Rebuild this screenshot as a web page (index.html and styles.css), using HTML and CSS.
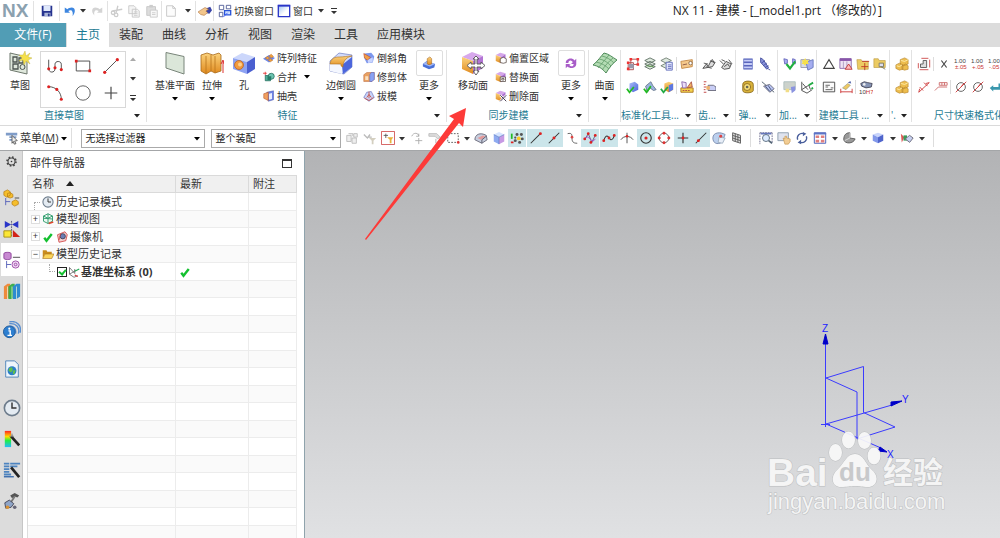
FILE: index.html
```html
<!DOCTYPE html>
<html lang="zh-CN">
<head>
<meta charset="utf-8">
<title>NX 11 - 建模</title>
<link rel="stylesheet" href="styles.css">
</head>
<body>
<svg class="defs" aria-hidden="true">
<defs>
<linearGradient id="gGold" x2="0" y2="1"><stop stop-color="#fbd27c"/><stop offset="1" stop-color="#e08a1e"/></linearGradient>
<linearGradient id="gBlue" x2="1" y2="1"><stop stop-color="#a9bdf8"/><stop offset="1" stop-color="#4a62d8"/></linearGradient>
<linearGradient id="gWin" x2="1" y2="1"><stop stop-color="#9cc0f0"/><stop offset=".6" stop-color="#fff"/></linearGradient>
<linearGradient id="gHue" x2="0" y2="1"><stop stop-color="#f22"/><stop offset=".35" stop-color="#fd0"/><stop offset=".6" stop-color="#2e4"/><stop offset="1" stop-color="#2bf"/></linearGradient>
</defs>
<symbol id="caret" viewBox="0 0 8 5"><path d="M1 1h6L4 4.500z"/></symbol>
<symbol id="caretbar" viewBox="0 0 8 8"><path d="M1 1h6v1H1zM1 4h6L4 7z"/></symbol>
<symbol id="save" viewBox="0 0 16 16"><path d="M2 2h12v12H2z" fill="#26338f"/><path d="M4 2h8v6H4z" fill="#dfe8fb"/><path d="M5 10h7v4H5z" fill="#aab6d8"/><path d="M9 11h2v3H9z" fill="#26338f"/></symbol>
<symbol id="undo" viewBox="0 0 16 16"><path d="M2 4v6h6L6 8c3-2 6-1 5 6 4-5 3-10-1-10-2 0-4 1-5 2z" fill="#3d86e0"/></symbol>
<symbol id="redo" viewBox="0 0 16 16"><path d="M14 4v6H8l2-2C7 6 4 7 5 13 1 9 2 4 6 4c2 0 4 1 5 2z" fill="#d4d4d4"/></symbol>
<symbol id="cut" viewBox="0 0 16 16"><g fill="none" stroke="#ccc" stroke-width="1.500"><path d="M9 2L7 10M3 8l11-2"/><circle cx="3.500" cy="10" r="2"/><circle cx="7" cy="12.500" r="2"/></g></symbol>
<symbol id="copy" viewBox="0 0 16 16"><path d="M2 2h6l2 2v7H2zM6 6h6l2 2v7H6z" fill="#f4f4f4" stroke="#c8c8c8"/><path d="M8 9h4M8 11h4M8 13h4" stroke="#ccc"/></symbol>
<symbol id="paste" viewBox="0 0 16 16"><path d="M2 3h10v10H2z" fill="#ddd" stroke="#c6c6c6"/><path d="M5 1h4v3H5z" fill="#ccc"/><path d="M6 7h8v8H6z" fill="#f8f8f8" stroke="#c8c8c8"/><path d="M8 10h4M8 12h4" stroke="#ccc"/></symbol>
<symbol id="page" viewBox="0 0 16 16"><path d="M3 2h7l3 3v9H3z" fill="#fcfcfc" stroke="#c4c4c4"/><path d="M10 2v3h3" fill="none" stroke="#c4c4c4"/></symbol>
<symbol id="touch" viewBox="0 0 16 16"><path d="M9 5l5-2 2 4-3 4-5-1z" fill="#3a45a8"/><path d="M0 9l8-5 4 2-3 2 2 2-4 3-4-1z" fill="#f2c68c" stroke="#a86c3a" stroke-width=".6"/></symbol>
<symbol id="switch" viewBox="0 0 16 16"><g fill="#fff" stroke="#4a5794"><path d="M1.500 1.500h5v5h-5zM9.500 1.500h5v4h-5zM1.500 9.500h4v5h-4z"/></g><path d="M7.500 7.500h7v5h-7z" fill="#cfe0ff" stroke="#2a55d8" stroke-width="1.500"/><path d="M6 15l5-5" stroke="#35f"/></symbol>
<symbol id="window" viewBox="0 0 16 16"><path d="M1.500 1.500h13v13h-13z" fill="url(#gWin)" stroke="#2a35c8" stroke-width="1.500"/><path d="M1 1h14v2H1z" fill="#2a35c8"/></symbol>

<symbol id="sketch" viewBox="0 0 24 24"><path d="M2 2l17 4v17L2 19z" fill="#dfe8dc" stroke="#6d776c"/><path d="M5 6h4v5H5zM11 7h4v5h-4zM5 13h5v5H5z" fill="none" stroke="#4c5450" stroke-width="1.300"/><circle cx="14.500" cy="16" r="2.500" fill="none" stroke="#4c5450"/><path d="M17 0l1 5 4-3-2 4 4 1-4 2 2 4-4-3-2 4-1-5-4 1 3-3-3-3h4z" fill="#f6e04a" stroke="#b9ac3a" stroke-width=".4"/></symbol>
<symbol id="profile" viewBox="0 0 20 20"><path d="M3 3v10c0 5 7 5 7 0V8c0-4 7-4 7 0v7" fill="none" stroke="#444"/><g fill="#d22"><circle cx="3" cy="13" r="1.700"/><circle cx="10" cy="12" r="1.700"/><circle cx="17" cy="14" r="1.700"/></g></symbol>
<symbol id="rect" viewBox="0 0 20 20"><path d="M2.500 4.500h15v11h-15z" fill="none" stroke="#444"/><path d="M1 3h3v3H1zM16 14h3v3h-3z" fill="#d22"/></symbol>
<symbol id="line" viewBox="0 0 20 20"><path d="M3 17L17 3" stroke="#444"/><circle cx="3" cy="17" r="1.800" fill="#d22"/><circle cx="17" cy="3" r="1.800" fill="#d22"/></symbol>
<symbol id="arc" viewBox="0 0 20 20"><path d="M3 3c8 0 14 6 14 14" fill="none" stroke="#444"/><g fill="#d22"><circle cx="3" cy="3" r="1.700"/><circle cx="12" cy="6" r="1.700"/><circle cx="17" cy="17" r="1.700"/></g></symbol>
<symbol id="circle" viewBox="0 0 20 20"><circle cx="10" cy="10" r="8" fill="none" stroke="#555"/></symbol>
<symbol id="plus" viewBox="0 0 20 20"><path d="M10 3v14M3 10h14" stroke="#444" stroke-width="1.300"/></symbol>

<symbol id="plane" viewBox="0 0 24 24"><path d="M3 1.500l18 4V23L3 17z" fill="#dbe6d9" stroke="#79857a"/></symbol>
<symbol id="extrude" viewBox="0 0 24 24"><path d="M1 4l6-2 6 2 6-2 2 2v16l-6 2-4-2-5 3-5-3z" fill="url(#gGold)" stroke="#a86a1a" stroke-width=".8"/><path d="M6 5v17M11 4v16M15 5v17" stroke="#b8741c" stroke-width=".8"/><path d="M23 22V10M21 13l2-4 1 4" stroke="#d33" fill="none"/></symbol>
<symbol id="hole" viewBox="0 0 24 24"><path d="M1 7l9-5 13 4-8 5z" fill="#ccd7fb"/><path d="M1 7l14 4v12L1 18z" fill="#8da2f2"/><path d="M15 11l8-5v12l-8 5z" fill="#4a5fd0"/><circle cx="7" cy="14" r="4.500" fill="#f29a3c" stroke="#b35d1e" stroke-width=".7"/><circle cx="8" cy="13.500" r="2" fill="#ffcf8a"/></symbol>
<symbol id="blend" viewBox="0 0 24 24"><path d="M1 10l9-8 13 2v12l-8 7-14-3z" fill="#d3dcfb" stroke="#5a6bb8" stroke-width=".6"/><path d="M1 12l12 2v9L1 20z" fill="#f4f7ff"/><path d="M13 14l10-8v10l-9 7z" fill="#4c66dc"/><path d="M1 13c1-6 5-7 9-7 5 0 8-1 13-1-5 1-8 4-9 9v2l-2-1v-2z" fill="url(#gGold)" stroke="#b0701c" stroke-width=".6"/></symbol>
<symbol id="moveface" viewBox="0 0 24 24"><path d="M1 6l10-5 11 4-10 5z" fill="#d7a8ec"/><path d="M1 6l11 4v13L1 18z" fill="url(#gGold)"/><path d="M12 10l10-5v12l-10 6z" fill="#b274d4"/><path d="M15 5l3 3h-2v5h4v-2l4 3.500-4 3.500v-2h-4v4h2l-3 4-3-4h2v-4h-4v2l-4-3.500L10 11v2h4V8h-2z" fill="#fff" stroke="#555" stroke-width=".9"/></symbol>
<symbol id="surface" viewBox="0 0 24 24"><path d="M0 14C5 10 8 5 11 2c5 1 8 4 13 7-4 3-8 8-11 13C9 17 5 15 0 14z" fill="#b4dcb4" stroke="#4f8a5a"/><path d="M3 11c6 1 10 4 13 7M6 8c6 1 9 4 12 7M9 5c5 1 9 4 12 7M5 17c4-4 7-9 11-13M9 19c3-4 7-9 11-12" stroke="#5f9a68" fill="none" stroke-width=".8"/></symbol>
<symbol id="feat" viewBox="0 0 16 16"><path d="M1 9l4-3 10 3-1 4-6 2-7-3z" fill="#4970d8"/><path d="M1 9l5-3 9 3-6 3z" fill="#9fb7f6"/><path d="M6 3l3-2 2 2v6L8 10 6 9z" fill="url(#gGold)" stroke="#a06018" stroke-width=".6"/></symbol>
<symbol id="cycle" viewBox="0 0 16 16"><path d="M2 8c0-5 7-7 10-3l2-2v6H8l2-2C8 4 5 5 5 8zM14 9c0 5-7 6-10 3l-2 2V9h6l-2 1c2 3 5 2 5-1z" fill="#a85cc8"/></symbol>
<symbol id="pattern" viewBox="0 0 16 16"><path d="M0 9l8-5 8 4-8 6z" fill="#6d88e8"/><path d="M3 8l3-2 3 2-3 2zM8 5l3-2 3 3-3 2zM7 11l3-2 3 2-3 2z" fill="#f0a040" stroke="#b56a20" stroke-width=".6"/></symbol>
<symbol id="unite" viewBox="0 0 16 16"><path d="M0 3h5M3 1v5" stroke="#d22"/><path d="M3 6h7v7H3z" fill="#4fae98" stroke="#216c5c"/><circle cx="11" cy="7" r="4" fill="#6cc4b0" stroke="#216c5c"/><path d="M6 7h5v5H6z" fill="#267a68"/></symbol>
<symbol id="shell" viewBox="0 0 16 16"><path d="M5 3l9-2v12l-7 2z" fill="#6c82e8" stroke="#3a48a0" stroke-width=".6"/><path d="M8 5l4-1v8l-4 1z" fill="#e8edff"/><path d="M1 5l6-2v11l-6-3z" fill="#f0a060" stroke="#b54c20" stroke-width=".7"/></symbol>
<symbol id="chamfer" viewBox="0 0 16 16"><path d="M2 2l9-1 4 5-2 8-8 1-3-6z" fill="#7d98ee"/><path d="M1 2l9 5-4 4-4-3z" fill="#f0a048" stroke="#c03d20" stroke-width=".7"/><path d="M6 11l7-4v6l-6 2z" fill="#c9d5ff"/></symbol>
<symbol id="trim" viewBox="0 0 16 16"><path d="M1 5l4-3h10v9l-3 3H1z" fill="#e8a060" stroke="#b35a30" stroke-width=".6"/><path d="M9 5l2-3h4v9l-3 3H9z" fill="#8ba2f2" stroke="#4a5cc0" stroke-width=".6"/><path d="M3 7h4v5H3z" fill="#fbe0c0"/></symbol>
<symbol id="draft" viewBox="0 0 16 16"><path d="M1 10l4-7 6-1 4 8-7 5z" fill="#c8d2f8" stroke="#5a68b8" stroke-width=".8"/><path d="M8 2v9M5 10l3-4 3 4M2 11l6 3 6-4" stroke="#c8402c" fill="none"/></symbol>
<symbol id="boxA" viewBox="0 0 16 16"><path d="M1 4l6-3 7 2-6 4z" fill="#d5a6ea"/><path d="M1 4l7 3v8l-7-3z" fill="url(#gGold)"/><path d="M8 7l6-4v8l-6 4z" fill="#ac70d0"/><path d="M7 9l4-2 4 2v5l-4 1-4-1z" fill="#fff" stroke="#554a44"/></symbol>
<symbol id="boxB" viewBox="0 0 16 16"><path d="M1 4l6-3 7 2-6 4z" fill="#d5a6ea"/><path d="M1 4l7 3v8l-7-3z" fill="url(#gGold)"/><path d="M8 7l6-4v8l-6 4z" fill="#ac70d0"/><path d="M7 8h7v6H7zM9 10h3v2H9z" fill="#fff" stroke="#554a44"/></symbol>
<symbol id="boxC" viewBox="0 0 16 16"><path d="M1 4l6-3 7 2-6 4z" fill="#d5a6ea"/><path d="M1 4l7 3v8l-7-3z" fill="url(#gGold)"/><path d="M8 7l6-4v8l-6 4z" fill="#ac70d0"/><path d="M7 7l8 8M15 7l-8 8" stroke="#fff" stroke-width="3"/><path d="M7 7l8 8M15 7l-8 8" stroke="#443b50" stroke-width="1.300"/></symbol>

<symbol id="t1" viewBox="0 0 16 16"><path d="M5.500 2.500h8v6h-8zM2.500 6.500h6v8h-6z" fill="none" stroke="#a44"/><path d="M3 8h6v5H3z" fill="#99a"/><path d="M4 1h3v3H4zM12 1h3v3h-3zM12 7h3v3h-3zM1 12h3v3H1zM1 5h3v3H1z" fill="#e33"/></symbol>
<symbol id="t2" viewBox="0 0 16 16"><g fill="#dfeadf" stroke="#5a6b60"><path d="M2 11l6-3 6 3-6 3zM2 8l6-3 6 3-6 3zM2 4l6-3 6 3-6 3z"/></g><path d="M4 10l8 1" stroke="#5a9a4c"/></symbol>
<symbol id="t3" viewBox="0 0 16 16"><g fill="#dfeadf" stroke="#6d7b70"><path d="M1 10l6-3 6 3-6 3zM1 4l6-3 6 3-6 3z"/></g><path d="M7 6h7v9H7z" fill="#e5e9ff" stroke="#5c68b8"/><path d="M9 9h4M9 11h4M9 13h4" stroke="#5c68b8"/></symbol>
<symbol id="t4" viewBox="0 0 16 16"><path d="M1 5l13-2v8L2 13z" fill="#f5c98c" stroke="#c48742"/><circle cx="12" cy="7" r="2" fill="#fff" stroke="#864"/><path d="M3 9l5-1" stroke="#854"/></symbol>
<symbol id="t5" viewBox="0 0 16 16"><path d="M4 4l6-2 4 3v6l-6 3-4-3z" fill="url(#gBlue)"/><path d="M1 10l3 4 5-6" stroke="#2b2" stroke-width="2" fill="none"/></symbol>
<symbol id="t6" viewBox="0 0 16 16"><path d="M3 7l6-5 2 4 4 5-3 1-4-3-3 5z" fill="#9ab2e0" stroke="#678"/><path d="M1 10l3 4 5-7" stroke="#2b2" stroke-width="2" fill="none"/></symbol>
<symbol id="t7" viewBox="0 0 16 16"><path d="M5 4l5-2 5 2v7l-5 3-5-3z" fill="url(#gGold)"/><path d="M10 6l5-2v7l-5 3z" fill="#5d78e0"/><path d="M1 10l3 4 5-6" stroke="#2a4" stroke-width="2" fill="none"/></symbol>
<symbol id="t8" viewBox="0 0 16 16"><path d="M1 9h14v5H1z" fill="#f5d24e" stroke="#a8731e"/><path d="M2 2l5 1v6H3z" fill="#ecdff7" stroke="#86a"/><path d="M8 9l5-7 1 6z" fill="#f0b060" stroke="#a54"/><path d="M3 12h9" stroke="#a44" stroke-dasharray="2 1"/></symbol>
<symbol id="gear1" viewBox="0 0 16 16"><path d="M1 13l4-5 2 3 3-6 5 1-3 5zM9 5l3-2 2 4" fill="#ddd" stroke="#444"/><path d="M2 7l5 1M5 11l6 2" stroke="#555"/></symbol>
<symbol id="gear2" viewBox="0 0 16 16"><path d="M1 4l4 4M3 3l4 2M3 12l5-7 6 3-2 5-6 1zM11 3l4 5M6 11l4-3 2 3" fill="#ddd" stroke="#444"/></symbol>
<symbol id="gear3" viewBox="0 0 16 16"><path d="M2 2h3M2 5h2M2 8h3M2 11h2M2 14h3" stroke="#b33"/><path d="M7 6h6l3 2v4H7z" fill="#c8cdf5" stroke="#667"/><path d="M5 7h4v4H5z" fill="#eeb26c"/></symbol>
<symbol id="spring1" viewBox="0 0 16 16"><path d="M3 2h10v12H3z" fill="#c6cdf7"/><path d="M3 2.500h10M3 6h10M3 10h10M3 13.500h10" stroke="#5a66bc" stroke-width="1.500"/><path d="M3 2v12M13 2v12" stroke="#7784cc"/></symbol>
<symbol id="spring2" viewBox="0 0 16 16"><path d="M3 1l3 2 6 9-2 2-7-8z" fill="#8a94dc" stroke="#414d9c"/><path d="M4 7l4-3M6 10l4-3M8 12l4-2M11 13l3 2" stroke="#414d9c"/></symbol>
<symbol id="spring3" viewBox="0 0 16 16"><path d="M2 5c0-5 12-5 12 0v7c0 3-12 4-12 0z" fill="#d9b23a" stroke="#8a6a1e"/><circle cx="7" cy="8" r="4" fill="#f4dc7a" stroke="#8a6a1e"/><circle cx="7" cy="8" r="1.500" fill="#665"/></symbol>
<symbol id="spring4" viewBox="0 0 16 16"><path d="M1 2l14 12" stroke="#456"/><path d="M3 7l7-2 5 5-5 4z" fill="#b8c2f0" stroke="#667"/><path d="M5 7l5 6M8 6l4 6" stroke="#457"/></symbol>
<symbol id="m1" viewBox="0 0 16 16"><path d="M1 2l4 1v4l-3 1zM11 2l3 1v5l-3-1z" fill="#a6aef0" stroke="#66b"/><path d="M4 8l4 5 6-8" stroke="#22b040" stroke-width="2.500" fill="none"/></symbol>
<symbol id="m2" viewBox="0 0 16 16"><path d="M1 3h10v9H1z" fill="#d8dde8" stroke="#99a"/><path d="M7 6l8-3v9l-6 3z" fill="#a5adf0" stroke="#67b"/><path d="M6 1l1 3 3-1-1 3 1 2-3 0-1 2-2-2-2 0 1-2-1-3 2 1z" fill="#f6e04a"/></symbol>
<symbol id="m3" viewBox="0 0 16 16"><path d="M1 2h13v9H1z" fill="#ccd2cc" stroke="#abb"/><path d="M9 8l5-1v5l-4 3z" fill="#8a93e0"/><path d="M3 10h4v4H3z" fill="#f1dd88"/></symbol>
<symbol id="m4" viewBox="0 0 16 16"><path d="M2 2v10l6 3 6-4M3 4l6 7M2 11l8-5 2 5" fill="none" stroke="#444"/><path d="M10 6l5-3M13 10l2-1" stroke="#2a4" stroke-width="2"/></symbol>
<symbol id="k1" viewBox="0 0 16 16"><path d="M8 3l6 10H2z" fill="none" stroke="#444" stroke-width="1.200"/></symbol>
<symbol id="k2" viewBox="0 0 16 16"><path d="M1 2h13v11H1z" fill="#eee4f4" stroke="#86a"/><path d="M1 3h13" stroke="#85a" stroke-width="3"/><path d="M5 5v8M9 5v8" stroke="#a9b"/><path d="M11 8l4 6H7z" fill="#fbb" stroke="#b33"/></symbol>
<symbol id="k3" viewBox="0 0 16 16"><path d="M1 3h5l1 2h7v9H2z" fill="#eccb62" stroke="#b8963e" stroke-width=".7"/><path d="M10 7v8M6 11h8M7 5h8" stroke="#b32"/></symbol>
<symbol id="k4" viewBox="0 0 16 16"><path d="M1 2h5l1 2h7v8H1z" fill="#eccb62" stroke="#b8963e" stroke-width=".7"/><path d="M7 7h5v4H7zM9 11l5 3" fill="#dde" stroke="#776"/></symbol>
<symbol id="k5" viewBox="0 0 16 16"><path d="M1.500 2.500h13v11h-13z" fill="#fafafa" stroke="#444"/><path d="M4 6h5M4 8h3M4 11h8M10 9h3" stroke="#555"/></symbol>
<symbol id="k6" viewBox="0 0 16 16"><path d="M2 13.500h13M2 10v5M15 10v5" stroke="#c33" fill="none"/><path d="M4 9l6-5 3 2-5 5z" fill="#edc964" stroke="#887" stroke-width=".6"/><path d="M10 3l3-2 1 3z" fill="#56a"/></symbol>
<symbol id="k7" viewBox="0 0 16 16"><path d="M2 4l4-2 4 1 5 1-1 4-6 1-5-2z" fill="#8795b5" stroke="#445"/><circle cx="6" cy="5" r="1.500" fill="#eee"/><text x="0" y="16" class="micro">10<tspan class="red">H7</tspan></text></symbol>
<symbol id="gold" viewBox="0 0 16 16"><path d="M6 3l5-2 4 2v5l-5 2-4-2zM1 9l4-2 4 2v5l-4 1-4-2zM8 10l4-2 3 2v4l-4 1-3-1z" fill="#edbd4e" stroke="#b5832c" stroke-width=".7"/><path d="M7 4l4 1 4-2M2 10l3 1 3-2" stroke="#fff0b0" fill="none"/></symbol>
<symbol id="d1" viewBox="0 0 16 16"><path d="M4 12V8h3V4h4v8z" fill="#ddd" stroke="#555"/><path d="M5 1.500h8M1.500 7v6M3 14.500h10M14.500 3v9" stroke="#c44"/></symbol>
<symbol id="dx" viewBox="0 0 16 16"><path d="M5 4l6 8M11 4l-6 8" stroke="#444" stroke-width="1.300"/></symbol>
<symbol id="d2" viewBox="0 0 16 16"><text x="0" y="7" class="micro">1.00</text><text x="1" y="14" class="micro red">±.05</text></symbol>
<symbol id="d3" viewBox="0 0 16 16"><text x="0" y="7" class="micro">1.00</text><text x="1" y="14" class="micro red">+.05</text></symbol>
<symbol id="d4" viewBox="0 0 16 16"><text x="0" y="7" class="micro">1.00</text><text x="1" y="14" class="micro red">-.05</text></symbol>
<symbol id="d5" viewBox="0 0 16 16"><path d="M2 14L14 3M3 8l4 4M8 3l4 4M2 14l1-4M14 3l-4 1" stroke="#c33" fill="none"/></symbol>
<symbol id="d6" viewBox="0 0 16 16"><path d="M1 12l4-4h10M6 3h9v3H6zM9 3v3M12 3v3" stroke="#c66" fill="none"/></symbol>
<symbol id="d7" viewBox="0 0 16 16"><circle cx="8" cy="8" r="5" fill="none" stroke="#555"/><path d="M2 14L14 2M8 8l3-4" stroke="#c33"/></symbol>
<symbol id="d8" viewBox="0 0 16 16"><path d="M2 9l4-3v2h6V4h2v7H6v2z" fill="#3a97ad"/></symbol>

<symbol id="menu" viewBox="0 0 16 16"><path d="M1 2h13v3H1zM5 6h8v2H5zM5 9h6v2H5z" fill="#7f9cc8"/><path d="M8 5l6 6-3 .5 1.500 3-2 .5-1-3L8 14z" fill="#eee" stroke="#555"/></symbol>
<symbol id="s1" viewBox="0 0 16 16"><path d="M2 5h5v7H2zM4 3h5v3M8 8h5v6H8zM10 3h4v4h-4z" fill="#eee" stroke="#bbb"/></symbol>
<symbol id="s2" viewBox="0 0 16 16"><path d="M1 4l4 4 3-4M6 7h4" stroke="#bbb" stroke-width="1.500" fill="none"/><path d="M7 8h8l-3 3v4h-2v-4z" fill="#d4cfc0"/></symbol>
<symbol id="s3" viewBox="0 0 16 16"><path d="M.5.500h15v15H.5z" fill="#fff" stroke="#cf4a4a"/><path d="M3 5h5M5.500 3v5" stroke="#555"/><path d="M7 7h7l-2 3v4h-2v-4z" fill="#e9b33c"/></symbol>
<symbol id="s4" viewBox="0 0 16 16"><path d="M2 6c2-5 8-4 8 0M10 3v3H7M10 8v7M6 11h8" stroke="#aaa" fill="none"/></symbol>
<symbol id="s5" viewBox="0 0 16 16"><path d="M1 3h9l4 4-3 2-3-3H1z" fill="#ddd" stroke="#bbb"/><path d="M9 9v5" stroke="#aaa"/></symbol>
<symbol id="s6" viewBox="0 0 16 16"><path d="M2 3h12v10H2z" fill="none" stroke="#555" stroke-dasharray="2 1.500"/><circle cx="14" cy="13" r="1.500" fill="#d33"/></symbol>
<symbol id="s7" viewBox="0 0 16 16"><path d="M1 10c0-6 6-9 13-5l1 5-6 4z" fill="#c7cede" stroke="#667"/><path d="M4 8l6-3 3 1-5 4z" fill="#e49a9a"/><path d="M9 10l5-4M9 10v4" stroke="#556"/></symbol>
<symbol id="s8" viewBox="0 0 16 16"><path d="M2 4l6-3 6 3-6 3z" fill="#d6e4ff"/><path d="M2 4l6 3v8l-6-3z" fill="#8faaf0"/><path d="M8 7l6-3v8l-6 3z" fill="#c79ae4"/><path d="M2 4l6 3 6-3M8 7v8" stroke="#57b" fill="none" stroke-width=".7"/></symbol>
<symbol id="s9" viewBox="0 0 16 16"><path d="M2 3v6" stroke="#2b2" stroke-width="2"/><path d="M1 13h3" stroke="#d22" stroke-width="2"/><g fill="#555"><circle cx="8" cy="4" r="1.700"/><circle cx="13" cy="4" r="1.700"/><circle cx="14" cy="9" r="1.700"/><circle cx="11" cy="13" r="1.700"/><circle cx="6" cy="11" r="1.700"/><circle cx="6" cy="7.500" r="1.300"/></g><circle cx="10" cy="8.500" r="2.200" fill="#fc2"/></symbol>
<symbol id="s10" viewBox="0 0 16 16"><path d="M2 14L13 3" stroke="#333" stroke-width="1.200"/><circle cx="13" cy="3" r="1.700" fill="#d22"/></symbol>
<symbol id="s11" viewBox="0 0 16 16"><path d="M2 14L14 2" stroke="#333" stroke-width="1.200"/><circle cx="8" cy="8" r="1.700" fill="#d22"/></symbol>
<symbol id="s12" viewBox="0 0 16 16"><path d="M3 3c5-1 5 1 5 5s1 6 6 6" fill="none" stroke="#555"/><circle cx="8" cy="7" r="1.500" fill="#d44"/></symbol>
<symbol id="s13" viewBox="0 0 16 16"><path d="M2 10L6 3l4 10 4-8" fill="none" stroke="#557"/><path d="M2 9c4-8 8 8 12 0" fill="none" stroke="#a4c"/><g fill="#d22"><circle cx="2" cy="9" r="1.600"/><circle cx="6" cy="3" r="1.600"/><circle cx="9" cy="13" r="1.600"/><circle cx="14" cy="5" r="1.600"/></g></symbol>
<symbol id="s14" viewBox="0 0 16 16"><path d="M2 11c3-9 6-4 7-2s4 1 5-4" fill="none" stroke="#333" stroke-width="1.200"/><g fill="#d22"><circle cx="2" cy="11" r="1.600"/><circle cx="8" cy="8" r="1.600"/><circle cx="14" cy="5" r="1.600"/></g></symbol>
<symbol id="s15" viewBox="0 0 16 16"><path d="M1 10c3-5 11-5 14 0M8 2v12" fill="none" stroke="#444"/><circle cx="8" cy="6" r="1.500" fill="#d22"/></symbol>
<symbol id="s16" viewBox="0 0 16 16"><circle cx="8" cy="8" r="6" fill="none" stroke="#333" stroke-width="1.300"/><circle cx="8" cy="8" r="1.800" fill="#d22"/></symbol>
<symbol id="s17" viewBox="0 0 16 16"><circle cx="8" cy="8" r="5.500" fill="none" stroke="#555"/><g fill="#d33"><circle cx="8" cy="2.500" r="1.700"/><circle cx="13.500" cy="8" r="1.700"/><circle cx="8" cy="13.500" r="1.700"/><circle cx="2.500" cy="8" r="1.700"/></g></symbol>
<symbol id="s18" viewBox="0 0 16 16"><path d="M8 2v12M2 8h12" stroke="#333" stroke-width="1.300"/><circle cx="8" cy="8" r="1.600" fill="#d22"/></symbol>
<symbol id="s19" viewBox="0 0 16 16"><path d="M2 14L14 2" stroke="#333" stroke-width="1.200"/><circle cx="5" cy="11" r="1.700" fill="#d22"/></symbol>
<symbol id="s20" viewBox="0 0 16 16"><path d="M1 8c0-7 9-7 14-4l-4 9c-5 3-10 1-10-5z" fill="#bcd0ee" stroke="#78a"/><path d="M8 7l7 1-3 6-5-1z" fill="#e8eef8" stroke="#9ab"/><circle cx="10" cy="6" r="1.700" fill="#d44"/></symbol>
<symbol id="s21" viewBox="0 0 16 16"><path d="M3 2l9 3v9l-9-3zM3 5l9 3M3 8l9 3M6 3v9M9 4v9" fill="#ddd" stroke="#555"/></symbol>
<symbol id="v1" viewBox="0 0 16 16"><path d="M1 2h14M1 2v13M15 2v12" stroke="#668" stroke-dasharray="2 1"/><path d="M2 2h12v2H2z" fill="#67b"/><circle cx="8" cy="8" r="4" fill="#dceaff" stroke="#567"/><path d="M11 11l4 3" stroke="#567" stroke-width="2"/></symbol>
<symbol id="v2" viewBox="0 0 16 16"><path d="M1 2h12v9H1z" fill="#dfe3ee" stroke="#89a"/><path d="M7 8l2 1V6l2 0v2l4 1v3l-2 3H9z" fill="#f2cd94" stroke="#c19048" stroke-width=".7"/></symbol>
<symbol id="v3" viewBox="0 0 16 16"><path d="M3 10a5.500 5.500 0 0 1 7-7M13 6a5.500 5.500 0 0 1-7 7" fill="none" stroke="#4a5f9c" stroke-width="1.500"/><path d="M9 1l4 2-4 3zM7 10l-4 3 4 2z" fill="#4a5f9c"/></symbol>
<symbol id="v4" viewBox="0 0 16 16"><path d="M1.500 2h13v12h-13z" fill="#fff" stroke="#3c55b5"/><path d="M1 2h14v2H1z" fill="#5c73c5"/><g fill="#e08080"><path d="M3 5h4v3H3zM9 5h4v3H9zM3 10h4v3H3zM9 10h4v3H9z"/></g></symbol>
<symbol id="v5" viewBox="0 0 16 16"><path d="M2 10c0-6 3-8 7-8v6l6 1c-2 6-12 6-13 1z" fill="#999" stroke="#555"/><path d="M9 2v6l-6 3" stroke="#ddd" fill="none"/></symbol>
<symbol id="v6" viewBox="0 0 16 16"><path d="M2 4l6-2 6 2-6 3z" fill="#c8d4fb"/><path d="M2 4l6 3v7l-6-3z" fill="#8298ea"/><path d="M8 7l6-3v7l-6 3z" fill="#5065cc"/></symbol>
<symbol id="v7" viewBox="0 0 16 16"><path d="M1 3l4 4-3 6z" fill="#d55"/><path d="M4 5h4v6H4z" fill="#3a9b58"/><path d="M6 9l5-4 4 3-4 5z" fill="#c7d0f0" stroke="#667"/></symbol>

<symbol id="cog" viewBox="0 0 16 16"><circle cx="8" cy="8" r="5.500" fill="none" stroke="#444" stroke-width="2" stroke-dasharray="2 2.320"/><circle cx="8" cy="8" r="4.300" fill="#dcdcdc" stroke="#444" stroke-width="1.300"/><circle cx="8" cy="8" r="1" fill="#333"/></symbol>
<symbol id="r1" viewBox="0 0 20 20"><path d="M1 3l4-2 3 2v4l-4 2-3-2zM5 5l3-1 3 2v3l-3 1-3-1zM10 14l4-2 3 2v3l-4 2-3-2z" fill="#f5be2c" stroke="#b87d12" stroke-width=".8"/><path d="M3 10v8M3 14h5" stroke="#5560b8"/><path d="M13 10h5" stroke="#444"/></symbol>
<symbol id="r2" viewBox="0 0 20 20"><path d="M2 1l7 4-7 4zM17 1l-7 4 7 4z" fill="#2a35c8"/><path d="M9.500 1v17" stroke="#557" stroke-dasharray="2 1"/><path d="M1 12h8v7H1z" fill="#fbe736" stroke="#a58d12"/><path d="M11 11l8 8h-8z" fill="#d22418"/></symbol>
<symbol id="r3" viewBox="0 0 20 20"><path d="M1 3c0-2 8-2 8 0v5c0 2-8 2-8 0z" fill="#c88ad2" stroke="#8c3f98"/><path d="M11 7h8" stroke="#444"/><path d="M4 11v8M4 15h5" stroke="#5560b8"/><circle cx="14" cy="15" r="4" fill="#f0d8f4" stroke="#9c4aa6"/><circle cx="14" cy="15" r="1.500" fill="none" stroke="#9c4aa6"/></symbol>
<symbol id="r4" viewBox="0 0 20 20"><path d="M1 5l4-3h3v14l-3 3H1z" fill="#ef8a3c"/><path d="M6 5l4-3h3v14l-3 3H6z" fill="#3cae4e"/><path d="M11 5l4-3h4v14l-4 3h-4z" fill="#2e8bd0"/><path d="M5 5v14M10 5v14M15 5v14" stroke="#e8f4e0" fill="none" stroke-width=".8"/></symbol>
<symbol id="r5" viewBox="0 0 20 20"><path d="M7 6c5-1 8 3 7 8M7 3c8-1 12 5 10 11M7 1c9-2 14 5 12 12" fill="none" stroke="#5a8fd0" stroke-width="1.500"/><circle cx="7" cy="12" r="6.500" fill="#2d7fd0" stroke="#1d5796"/><path d="M6 11h2v5M5 16h5" stroke="#fff" stroke-width="1.600" fill="none"/><circle cx="7" cy="8.500" r="1.200" fill="#fff"/></symbol>
<symbol id="r6" viewBox="0 0 20 20"><path d="M3 1h10l4 4v14H3z" fill="#eef5fb" stroke="#4a80b8"/><circle cx="10" cy="12" r="5" fill="#2b7fc8"/><path d="M7 9l3-1 1 3-2 3-3-2zM11 12l3-1-1 4-2 1z" fill="#62c04a"/></symbol>
<symbol id="clock" viewBox="0 0 20 20"><circle cx="10" cy="10" r="8.500" fill="#e4ebf2" stroke="#6d7c8c" stroke-width="1.800"/><path d="M10 4v6h5" stroke="#333" fill="none" stroke-width="1.600"/></symbol>
<symbol id="r8" viewBox="0 0 20 20"><path d="M2 1h7v18H2z" fill="url(#gHue)"/><path d="M9 7l9 10" stroke="#222" stroke-width="3"/><path d="M10 4v4M7 7h5" stroke="#777"/></symbol>
<symbol id="r9" viewBox="0 0 20 20"><path d="M1 3h6M1 6h6M1 9h6M1 12h6M1 15h8M8 3h11M8 6h8" stroke="#4d84c0" stroke-width="2"/><path d="M1 17.500h11" stroke="#36a" stroke-width="1.500"/><path d="M9 7l9 11" stroke="#222" stroke-width="3"/></symbol>
<symbol id="r10" viewBox="0 0 20 20"><path d="M8 4l5-3 5 3-2 2-3-1-3 2z" fill="#555"/><path d="M13 5l-4 6" stroke="#777" stroke-width="2"/><path d="M2 12l5-3 5 4-3 4-6 1z" fill="#8fa5c8" stroke="#445"/><circle cx="5" cy="17" r="2" fill="#d89030"/><circle cx="13" cy="17" r="2" fill="#667"/></symbol>

<symbol id="views" viewBox="0 0 16 16"><path d="M8 1l6 3v7l-6 3-6-3V4zM8 1v13M2 7l12 1M2 4l6 3 6-3" fill="#eaf7f0" stroke="#2b9a6a" stroke-width="1.200"/><path d="M9 14l6-2" stroke="#e0462c" stroke-width="2"/></symbol>
<symbol id="cam" viewBox="0 0 16 16"><path d="M2 5l10-4 3 4-2 8-9 2z" fill="#f3d0d0" stroke="#c33"/><circle cx="9" cy="7" r="3.500" fill="#6b7db5" stroke="#334"/><path d="M4 12l2-8" stroke="#c33"/></symbol>
<symbol id="folder" viewBox="0 0 16 16"><path d="M1 3h5l1 2h6v3H4l-3 6z" fill="#c98c1e"/><path d="M4 8h12l-3 6H1z" fill="#fbd45a" stroke="#a8741a" stroke-width=".8"/></symbol>
<symbol id="check" viewBox="0 0 16 16"><path d="M3 9l3 4 7-9" fill="none" stroke="#14c030" stroke-width="3.200"/></symbol>
<symbol id="csys" viewBox="0 0 16 16"><path d="M2 2v9l6 4 5-2M2 2l7 8V4M2 11l8-5" fill="none" stroke="#555"/><path d="M9 7l6-3" stroke="#2a5" stroke-width="1.500"/><path d="M9 12l4 2" stroke="#d33" stroke-width="1.500"/></symbol>
</svg>

<header class="titlebar">
  <div class="brand">NX</div>
  <div class="qa qa-one"><button aria-label="保存"><svg><use href="#save"/></svg></button></div>
  <div class="qa qa-undo"><button aria-label="撤消"><svg><use href="#undo"/></svg></button><button class="drop" aria-label="撤消列表"><svg><use href="#caret"/></svg></button><button aria-label="重做"><svg><use href="#redo"/></svg></button></div>
  <div class="qa qa-edit"><button aria-label="剪切"><svg><use href="#cut"/></svg></button><button aria-label="复制"><svg><use href="#copy"/></svg></button><button aria-label="粘贴"><svg><use href="#paste"/></svg></button></div>
  <div class="qa qa-new"><button aria-label="新建"><svg><use href="#page"/></svg></button><button class="drop" aria-label="新建列表"><svg><use href="#caret"/></svg></button></div>
  <div class="qa qa-touch"><button aria-label="触控"><svg><use href="#touch"/></svg></button></div>
  <div class="qa-windows"><button><svg><use href="#switch"/></svg>切换窗口</button><button><svg><use href="#window"/></svg>窗口</button><button class="drop" aria-label="窗口列表"><svg><use href="#caret"/></svg></button><button class="drop tall" aria-label="自定义"><svg><use href="#caretbar"/></svg></button></div>
  <h1 class="doc-title">NX 11 - 建模 - [_model1.prt （修改的）]</h1>
</header>

<nav class="tabs">
  <button class="file">文件(F)</button><button class="active">主页</button><button>装配</button><button>曲线</button><button>分析</button><button>视图</button><button>渲染</button><button>工具</button><button>应用模块</button>
</nav>

<section class="ribbon">
  <div class="group g-sketch">
    <div class="body">
      <button class="large"><svg><use href="#sketch"/></svg><span>草图</span></button>
      <div class="gallery">
        <button aria-label="轮廓"><svg><use href="#profile"/></svg></button><button aria-label="矩形"><svg><use href="#rect"/></svg></button><button aria-label="直线"><svg><use href="#line"/></svg></button>
        <button aria-label="圆弧"><svg><use href="#arc"/></svg></button><button aria-label="圆"><svg><use href="#circle"/></svg></button><button aria-label="点"><svg><use href="#plus"/></svg></button>
      </div>
      <div class="scroller"><button class="drop up" aria-label="上"><svg><use href="#caret"/></svg></button><button class="drop" aria-label="下"><svg><use href="#caret"/></svg></button><button class="drop tall" aria-label="展开"><svg><use href="#caretbar"/></svg></button></div>
    </div>
    <div class="foot"><span>直接草图</span><button class="drop" aria-label="直接草图选项"><svg><use href="#caret"/></svg></button></div>
  </div>
  <div class="group g-feature">
    <div class="body">
      <button class="large"><svg><use href="#plane"/></svg><span>基准平面</span><svg class="dn"><use href="#caret"/></svg></button>
      <button class="large"><svg><use href="#extrude"/></svg><span>拉伸</span><svg class="dn"><use href="#caret"/></svg></button>
      <button class="large"><svg><use href="#hole"/></svg><span>孔</span></button>
      <div class="stack">
        <button><svg><use href="#pattern"/></svg>阵列特征</button>
        <button><svg><use href="#unite"/></svg>合并<svg class="dn"><use href="#caret"/></svg></button>
        <button><svg><use href="#shell"/></svg>抽壳</button>
      </div>
      <button class="large wide"><svg><use href="#blend"/></svg><span>边倒圆</span><svg class="dn"><use href="#caret"/></svg></button>
      <div class="stack">
        <button><svg><use href="#chamfer"/></svg>倒斜角</button>
        <button><svg><use href="#trim"/></svg>修剪体</button>
        <button><svg><use href="#draft"/></svg>拔模</button>
      </div>
      <button class="large more"><i><svg><use href="#feat"/></svg></i><span>更多</span><svg class="dn"><use href="#caret"/></svg></button>
    </div>
    <div class="foot"><span>特征</span><button class="drop" aria-label="特征选项"><svg><use href="#caret"/></svg></button></div>
  </div>
  <div class="group g-sync">
    <div class="body">
      <button class="large wide"><svg><use href="#moveface"/></svg><span>移动面</span></button>
      <div class="stack">
        <button><svg><use href="#boxA"/></svg>偏置区域</button>
        <button><svg><use href="#boxB"/></svg>替换面</button>
        <button><svg><use href="#boxC"/></svg>删除面</button>
      </div>
      <button class="large more"><i><svg><use href="#cycle"/></svg></i><span>更多</span><svg class="dn"><use href="#caret"/></svg></button>
    </div>
    <div class="foot"><span>同步建模</span><button class="drop" aria-label="同步建模选项"><svg><use href="#caret"/></svg></button></div>
  </div>
  <div class="group g-surface">
    <div class="body"><button class="large"><svg><use href="#surface"/></svg><span>曲面</span><svg class="dn"><use href="#caret"/></svg></button></div>
  </div>
  <div class="group tools">
    <div class="body">
      <div><button aria-label="工具"><svg><use href="#t1"/></svg></button><button aria-label="图层"><svg><use href="#t2"/></svg></button><button aria-label="图层表"><svg><use href="#t3"/></svg></button><hr><button aria-label="属性"><svg><use href="#t4"/></svg></button></div>
      <div><button aria-label="检查"><svg><use href="#t5"/></svg></button><button aria-label="检查装配"><svg><use href="#t6"/></svg></button><button aria-label="检查部件"><svg><use href="#t7"/></svg></button><hr><button aria-label="标准件"><svg><use href="#t8"/></svg></button></div>
    </div>
    <div class="foot"><span>标准化工具...</span><button class="drop" aria-label="选项"><svg><use href="#caret"/></svg></button></div>
  </div>
  <div class="group tools">
    <div class="body">
      <div><button aria-label="柱齿轮"><svg><use href="#gear1"/></svg></button><button aria-label="锥齿轮"><svg><use href="#gear2"/></svg></button></div>
      <div><button aria-label="齿轮表"><svg><use href="#gear3"/></svg></button></div>
    </div>
    <div class="foot"><span>齿...</span><button class="drop" aria-label="选项"><svg><use href="#caret"/></svg></button></div>
  </div>
  <div class="group tools">
    <div class="body">
      <div><button aria-label="压缩弹簧"><svg><use href="#spring1"/></svg></button><button aria-label="拉伸弹簧"><svg><use href="#spring2"/></svg></button></div>
      <div><button aria-label="碟簧"><svg><use href="#spring3"/></svg></button><hr><button aria-label="删除弹簧"><svg><use href="#spring4"/></svg></button></div>
    </div>
    <div class="foot"><span>弹...</span><button class="drop" aria-label="选项"><svg><use href="#caret"/></svg></button></div>
  </div>
  <div class="group tools">
    <div class="body">
      <div><button aria-label="验证"><svg><use href="#m1"/></svg></button><button aria-label="新建工件"><svg><use href="#m2"/></svg></button></div>
      <div><button aria-label="毛坯"><svg><use href="#m3"/></svg></button><button aria-label="坐标系"><svg><use href="#m4"/></svg></button></div>
    </div>
    <div class="foot"><span>加...</span><button class="drop" aria-label="选项"><svg><use href="#caret"/></svg></button></div>
  </div>
  <div class="group tools">
    <div class="body">
      <div><button aria-label="三角"><svg><use href="#k1"/></svg></button><button aria-label="表格"><svg><use href="#k2"/></svg></button><button aria-label="导入"><svg><use href="#k3"/></svg></button><button aria-label="文件夹"><svg><use href="#k4"/></svg></button></div>
      <div><button aria-label="注释"><svg><use href="#k5"/></svg></button><button aria-label="测量"><svg><use href="#k6"/></svg></button><hr><button aria-label="公差"><svg><use href="#k7"/></svg></button></div>
    </div>
    <div class="foot"><span>建模工具 ...</span><button class="drop" aria-label="选项"><svg><use href="#caret"/></svg></button></div>
  </div>
  <div class="group tools">
    <div class="body">
      <div><button aria-label="部件"><svg><use href="#gold"/></svg></button></div>
      <div><button aria-label="组件"><svg><use href="#gold"/></svg></button></div>
    </div>
    <div class="foot narrow"><span>'.</span><button class="drop" aria-label="选项"><svg><use href="#caret"/></svg></button></div>
  </div>
  <div class="group tools last">
    <div class="body">
      <div><button aria-label="尺寸"><svg><use href="#d1"/></svg></button><hr><button aria-label="无公差"><svg><use href="#dx"/></svg></button><button aria-label="双向公差"><svg><use href="#d2"/></svg></button><button aria-label="单向公差"><svg><use href="#d3"/></svg></button><button aria-label="负公差"><svg><use href="#d4"/></svg></button></div>
      <div><button aria-label="平行"><svg><use href="#d5"/></svg></button><button aria-label="引线"><svg><use href="#d6"/></svg></button><hr><button aria-label="半径"><svg><use href="#d7"/></svg></button><button aria-label="直径"><svg><use href="#d7"/></svg></button><button aria-label="返回"><svg><use href="#d8"/></svg></button></div>
    </div>
    <div class="foot"><span>尺寸快速格式化</span></div>
  </div>
</section>

<section class="selbar">
  <button class="menu"><svg><use href="#menu"/></svg><span>菜单(<u>M</u>)</span><svg class="dn"><use href="#caret"/></svg></button>
  <label class="field filter"><select aria-label="选择过滤器"><option>无选择过滤器</option></select><svg><use href="#caret"/></svg></label>
  <label class="field scope"><select aria-label="选择范围"><option>整个装配</option></select><svg><use href="#caret"/></svg></label>
  <div class="icons">
    <div><button aria-label="装配约束"><svg><use href="#s1"/></svg></button><button aria-label="重置过滤器"><svg><use href="#s2"/></svg></button><button aria-label="过滤器"><svg><use href="#s3"/></svg></button><button class="drop" aria-label="列表"><svg><use href="#caret"/></svg></button></div>
    <div><button aria-label="恢复"><svg><use href="#s4"/></svg></button><button aria-label="返回"><svg><use href="#s5"/></svg></button><button aria-label="框选"><svg><use href="#s6"/></svg></button><button class="drop" aria-label="列表"><svg><use href="#caret"/></svg></button><button aria-label="着色"><svg><use href="#s7"/></svg></button><button aria-label="体"><svg><use href="#s8"/></svg></button><button class="on" aria-label="捕捉"><svg><use href="#s9"/></svg></button></div>
    <div><button class="on" aria-label="端点"><svg><use href="#s10"/></svg></button><button class="on" aria-label="中点"><svg><use href="#s11"/></svg></button><button aria-label="控制点"><svg><use href="#s12"/></svg></button><button class="on" aria-label="极点"><svg><use href="#s13"/></svg></button></div>
    <div><button class="on" aria-label="定义点"><svg><use href="#s14"/></svg></button><button aria-label="交点"><svg><use href="#s15"/></svg></button></div>
    <div><button class="on" aria-label="圆心"><svg><use href="#s16"/></svg></button><button aria-label="象限点"><svg><use href="#s17"/></svg></button></div>
    <div><button class="on" aria-label="现有点"><svg><use href="#s18"/></svg></button><button class="on" aria-label="曲线上的点"><svg><use href="#s19"/></svg></button><button aria-label="面上的点"><svg><use href="#s20"/></svg></button><button aria-label="栅格点"><svg><use href="#s21"/></svg></button></div>
  </div>
  <div class="icons view"><div><button aria-label="适合窗口"><svg><use href="#v1"/></svg></button><button aria-label="平移"><svg><use href="#v2"/></svg></button><button aria-label="旋转"><svg><use href="#v3"/></svg></button><button aria-label="布局"><svg><use href="#v4"/></svg></button><button class="drop" aria-label="列表"><svg><use href="#caret"/></svg></button><button aria-label="截面"><svg><use href="#v5"/></svg></button><button class="drop" aria-label="列表"><svg><use href="#caret"/></svg></button><button aria-label="渲染样式"><svg><use href="#v6"/></svg></button><button class="drop" aria-label="列表"><svg><use href="#caret"/></svg></button><button aria-label="显示"><svg><use href="#v7"/></svg></button><button class="drop" aria-label="列表"><svg><use href="#caret"/></svg></button></div></div>
</section>

<main class="work">
  <nav class="rail">
    <button class="cog" aria-label="资源条选项"><svg><use href="#cog"/></svg></button>
    <button aria-label="装配导航器"><svg><use href="#r1"/></svg></button>
    <button aria-label="约束导航器"><svg><use href="#r2"/></svg></button>
    <button class="active" aria-label="部件导航器"><svg><use href="#r3"/></svg></button>
    <button aria-label="重用库"><svg><use href="#r4"/></svg></button>
    <button class="spaced" aria-label="信息"><svg><use href="#r5"/></svg></button>
    <button class="spaced" aria-label="浏览器"><svg><use href="#r6"/></svg></button>
    <button class="spaced" aria-label="历史记录"><svg><use href="#clock"/></svg></button>
    <button aria-label="材料"><svg><use href="#r8"/></svg></button>
    <button aria-label="加工向导"><svg><use href="#r9"/></svg></button>
    <button aria-label="角色"><svg><use href="#r10"/></svg></button>
  </nav>
  <aside class="panel">
    <div class="panel-head"><h2>部件导航器</h2><button aria-label="最大化"></button></div>
    <table class="tree">
      <colgroup><col class="c-name"><col class="c-new"><col></colgroup>
      <thead><tr><th>名称<i class="sort"></i></th><th>最新</th><th>附注</th></tr></thead>
      <tbody>
        <tr><td><div class="node"><b class="stub first"></b><svg><use href="#clock"/></svg>历史记录模式</div></td><td></td><td></td></tr>
        <tr><td><div class="node"><b class="exp">+</b><svg><use href="#views"/></svg>模型视图</div></td><td></td><td></td></tr>
        <tr><td><div class="node"><b class="exp">+</b><svg><use href="#check"/></svg><svg><use href="#cam"/></svg>摄像机</div></td><td></td><td></td></tr>
        <tr><td><div class="node"><b class="exp">−</b><svg><use href="#folder"/></svg>模型历史记录</div></td><td></td><td></td></tr>
        <tr><td><label class="node child"><b class="stub last"></b><input type="checkbox" checked><svg><use href="#csys"/></svg><strong>基准坐标系 (0)</strong></label></td><td><svg><use href="#check"/></svg></td><td></td></tr>
        <tr><td></td><td></td><td></td></tr><tr><td></td><td></td><td></td></tr><tr><td></td><td></td><td></td></tr><tr><td></td><td></td><td></td></tr><tr><td></td><td></td><td></td></tr>
        <tr><td></td><td></td><td></td></tr><tr><td></td><td></td><td></td></tr><tr><td></td><td></td><td></td></tr><tr><td></td><td></td><td></td></tr><tr><td></td><td></td><td></td></tr>
        <tr><td></td><td></td><td></td></tr><tr><td></td><td></td><td></td></tr><tr><td></td><td></td><td></td></tr><tr><td></td><td></td><td></td></tr><tr><td></td><td></td><td></td></tr>
      </tbody>
    </table>
  </aside>
  <section class="viewport">
    <svg class="datum" viewBox="760 320 200 200">
      <g class="axes">
        <path d="M825.500 344v83M821 424.500h9M826 424l66-19M826 424l55 24M826 378l37.500-11.500v46L895 427l-38 12M826 378l31 14v47"/>
        <path class="tip" d="M825.500 334l2.500 10h-5zM902 401l-11 5v-4zM887 452l-9-1 2-4z"/>
        <text x="822" y="332">Z</text><text x="902" y="403">Y</text><text x="887" y="458">X</text>
      </g>
      <g class="mark">
        <ellipse cx="835.500" cy="452.500" rx="6.500" ry="8.500"/><ellipse cx="848.500" cy="440" rx="6.500" ry="8.500"/><ellipse cx="864.500" cy="440.500" rx="6.500" ry="8.500"/><ellipse cx="874" cy="456" rx="6.500" ry="8.500"/>
        <path d="M855 454c9 0 10 10 17 16 8 7 5 17-4 17-6 0-8-1-13-1s-8 1-14 1c-9 0-11-10-4-17 8-7 9-16 18-16z"/>
        <text class="bai" x="767" y="486">Bai</text>
        <text class="du" x="839" y="481">du</text>
        <text class="jy" x="883" y="483">经验</text>
        <text class="url" x="768" y="509">jingyan.baidu.com</text>
      </g>
    </svg>
  </section>
</main>
<svg class="arrow" viewBox="0 0 102 134" aria-hidden="true"><path d="M101 1L98 20l-4-4L1 133l-1-1L89 12l-5-3z"/></svg>
</body>
</html>
```
FILE: styles.css
```css
* { box-sizing: border-box; }
body {
  margin: 0;
  height: 100vh;
  display: flex;
  flex-direction: column;
  overflow: hidden;
  position: relative;
  background: #fff;
  color: #333;
  font: 10px/14px "Open Sans", "Noto Sans CJK SC", sans-serif;
}
.defs { position: absolute; width: 0; height: 0; }
button {
  display: flex;
  align-items: center;
  justify-content: center;
  flex: none;
  margin: 0;
  padding: 0;
  border: 0;
  background: none;
  color: inherit;
  font: inherit;
  white-space: nowrap;
}
svg { display: block; flex: none; width: 14px; height: 14px; }
.drop { width: 10px; }
.drop svg, svg.dn { width: 8px; height: 5px; }
.drop.tall svg { height: 8px; }
.micro { fill: #444; font: 7px "Liberation Sans", sans-serif; }
.micro.red, .micro .red { fill: #c33; }

.titlebar { display: flex; height: 23px; flex: none; align-items: center; padding-bottom: 2px; }
.brand { width: 33px; padding-left: 2px; color: #8ba1af; font: bold 19px/20px "Liberation Sans", sans-serif; }
.qa { display: flex; height: 20px; align-items: center; justify-content: space-around; border-left: 1px solid #e2e2e2; }
.qa-one { width: 26px; }
.qa-undo { width: 48px; padding: 0 2px; }
.qa-edit { width: 54px; }
.qa-new { width: 34px; }
.qa-touch { width: 19px; border-right: 1px solid #e2e2e2; }
.qa-windows { display: flex; align-items: center; gap: 3px; padding-left: 4px; }
.qa-windows button:not(.drop) { gap: 2px; }
.doc-title { margin: 0 118px 0 auto; font-size: 12px; font-weight: 400; white-space: nowrap; color: #222; }

.tabs { display: flex; height: 24px; flex: none; background: #dcdcdc; gap: 1px; font-size: 12px; }
.tabs button { padding: 0 9px; color: #333; }
.tabs .file { width: 66px; background: #519db5; color: #fff; }
.tabs .active { background: #fff; color: #1c7a93; }

.ribbon { display: flex; flex: none; height: 79px; padding-top: 3px; border-bottom: 1px solid #dadada; overflow: hidden; }
.group { display: flex; flex: none; flex-direction: column; border-right: 1px solid #e2e2e2; margin-bottom: 3px; }
.body { display: flex; flex: 1; align-items: flex-start; gap: 2px; padding: 0 2px 0 8px; }
.foot { display: flex; height: 14px; contain: inline-size; align-items: center; color: #1f7b93; overflow: hidden; }
.foot span { flex: 1; text-align: center; white-space: nowrap; }
.foot .drop { width: 18px; color: #222; }
.g-sketch { width: 147px; }
.g-feature { width: 300px; }
.g-sync { width: 142px; }
.g-surface { width: 32px; }
.g-surface .body { padding: 0; justify-content: center; }
.g-sketch .body { gap: 8px; }
.g-sketch .large { min-width: 24px; }
.large { flex-direction: column; min-width: 30px; height: 54px; justify-content: flex-start; }
.large > svg { width: 24px; height: 24px; margin: 1px 0 3px; }
.large svg.dn { width: 8px; height: 5px; margin: 4px 0 0; }
.wide { padding: 0 3px; }
.more { margin-left: auto; }
.more i { display: flex; align-items: center; justify-content: center; width: 27px; height: 26px; margin-bottom: 2px; border: 1px solid #dedede; border-radius: 2px; }
.stack { display: flex; flex-direction: column; margin-top: -2px; padding: 0 4px 0 2px; }
.stack button { height: 19px; gap: 2px; justify-content: flex-start; }
.stack svg { width: 12px; height: 12px; }
.stack svg.dn { width: 8px; height: 5px; margin-left: 4px; }
.gallery { display: grid; grid-template-columns: repeat(3, 28px); height: 57px; margin-top: 1px; border: 1px solid #d8d8d8; }
.gallery svg { width: 18px; height: 18px; }
.scroller { display: flex; flex-direction: column; margin-left: -6px; }
.scroller button { height: 19px; }
.scroller .up { transform: rotate(180deg); color: #aaa; }
.scroller, .drop { fill: currentColor; }
.tools .body { flex-direction: column; gap: 6px; padding: 5px 1px 0 3px; }
.tools .body > div { display: flex; align-items: center; height: 17px; }
.tools .body button { width: 17px; }
.tools hr { width: 1px; height: 14px; margin: 0 1px; border: 0; background: #dcdcdc; }
.narrow .drop { width: 14px; }
.tools.last { flex: 1 0 0; min-width: 0; border-right: 0; }
.last .foot { padding-left: 22px; }
.last .foot span { text-align: left; }

.selbar { display: flex; flex: none; height: 25px; align-items: center; border-bottom: 1px solid #a4a6a8; }
.menu { height: 20px; gap: 1px; padding: 0 3px 0 5px; font-size: 11px; border-right: 1px solid #dedede; }
.menu svg.dn { margin-left: 1px; }
.field { position: relative; flex: none; height: 19px; }
.filter { width: 124px; margin-left: 9px; }
.scope { width: 130px; margin: 0 2px 0 6px; }
.field select { appearance: none; width: 100%; height: 100%; margin: 0; padding: 0 3px; border: 1px solid #aaa; border-radius: 0; background: #fff; color: #222; font: inherit; }
.field svg { position: absolute; right: 4px; top: 7px; width: 8px; height: 5px; pointer-events: none; }
.icons { display: flex; gap: 1px; height: 18px; }
.icons > div { display: flex; }
.icons button { width: 18px; }
.icons .drop { width: 10px; }
.icons .on { background: #cbe5ea; }
.view { margin-left: 4px; padding: 0 6px 0 6px; border-left: 1px solid #ddd; border-right: 1px solid #ddd; }
.view .drop { width: 11px; }

.work { display: flex; flex: 1; min-height: 0; }
.rail { display: flex; flex-direction: column; width: 23px; background: #dcdcdc; border-right: 1px solid #c6c6c6; }
.rail button { height: 31px; margin-left: 1px; }
.rail svg { width: 18px; height: 18px; }
.rail .cog { height: 20px; margin: 0 0 11px; }
.rail .cog svg { width: 13px; height: 13px; }
.rail .active { background: #fff; height: 33px; margin-top: -1px; margin-right: -1px; margin-bottom: -1px; }
.rail .spaced { margin-top: 8px; }
.panel { display: flex; flex-direction: column; flex: none; width: 282px; padding: 0 7px 0 4px; border-right: 1px solid #8fa3ac; overflow: hidden; }
.panel-head { display: flex; flex: none; height: 24px; align-items: center; justify-content: space-between; padding: 0 5px 0 3px; }
.panel-head h2 { margin: 0; font-size: 11px; font-weight: 400; }
.panel-head button { width: 10px; height: 9px; border: 1px solid #333; border-top-width: 2px; }
.tree { width: 100%; table-layout: fixed; border-collapse: separate; border-spacing: 0; font-size: 11px; line-height: 14px; border-left: 1px solid #ddd; }
.c-name { width: 148px; }
.c-new { width: 73px; }
.tree th { height: 18px; padding: 0 4px; background: #f0f0f0; border: solid #dadada; border-width: 1px 1px 1px 0; font-weight: 400; text-align: left; }
.tree td { height: 17px; padding: 0 3px; border: solid #ececec; border-width: 0 1px 1px 0; }
.tree tr:nth-child(odd) td { height: 18px; }
.tree tr:nth-child(even) td { background: #fafafa; }
.sort { display: inline-block; margin: 0 0 2px 12px; border: solid transparent; border-width: 0 4px 5px; border-bottom-color: #222; }
.node { display: flex; align-items: center; height: 16px; gap: 2px; white-space: nowrap; }
.node svg, td > svg { width: 12px; height: 12px; }
.exp { width: 9px; height: 9px; border: 1px solid #ddd; background: #fff; font: 9px/6px "Liberation Sans", sans-serif; text-align: center; }
.stub { width: 6px; margin-left: 3px; border-top: 1px dotted #aaa; }
.stub.first { height: 8px; margin-top: 8px; border-left: 1px dotted #aaa; }
.child { padding-left: 15px; gap: 1px; }
.stub.last { height: 8px; margin: 0 1px 8px 3px; border: dotted #aaa; border-width: 0 0 1px 1px; }
.child input { appearance: none; position: relative; width: 10px; height: 10px; margin: 0; border: 1px solid #222; background: #fff; }
.child input:checked::after { content: ""; position: absolute; left: 2px; top: 0; width: 3px; height: 5px; border: solid #14c030; border-width: 0 2px 2px 0; transform: rotate(40deg); }

.viewport { position: relative; flex: 1; min-width: 0; background: linear-gradient(#b2b3b5, #e0e1e3); }
.datum { position: absolute; right: 40px; bottom: 18px; width: 200px; height: 200px; overflow: visible; }
.axes path { fill: none; stroke: #3b3bff; }
.axes .tip { fill: #0000c8; stroke: #0000c8; }
.axes text { fill: #2222ff; font: 10px "Liberation Sans", sans-serif; }
.mark { fill: #f8f8f8; fill-opacity: .92; stroke: #bcbec0; stroke-width: 1px; paint-order: stroke; }
.bai { font: bold 39px "Liberation Sans", sans-serif; }
.du { font: bold 26px "Liberation Sans", sans-serif; fill: #c8c9cb; fill-opacity: 1; stroke: none; }
.jy { font: bold 30px "Noto Sans CJK SC", sans-serif; }
.url { font: 22px "Liberation Sans", sans-serif; }
.arrow { position: absolute; left: 365px; top: 107px; width: 102px; height: 134px; fill: #fd3a38; pointer-events: none; }
```
